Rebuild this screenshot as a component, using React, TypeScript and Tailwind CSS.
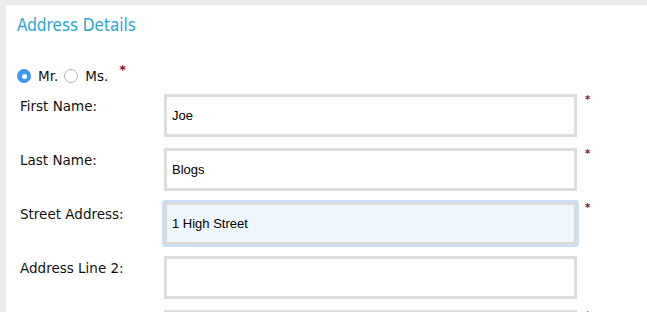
const fields = [
  { label: "First Name:", value: "Joe", required: true },
  { label: "Last Name:", value: "Blogs", required: true },
  { label: "Street Address:", value: "1 High Street", required: true, focused: true },
  { label: "Address Line 2:", value: "", required: false },
  { label: "", value: "", required: true },
];

export default function App() {
  return (
    <div className="h-[312px] overflow-hidden bg-[#ececec] pl-[6px] pt-[5px]">
      <div className="h-full bg-white pl-[11px] font-['DejaVu_Sans',Verdana,sans-serif] text-[13.5px] text-[#111]">
        {/* Section title */}
        <h2 className="pt-[10px] font-['DejaVu_Sans_Condensed','DejaVu_Sans',sans-serif] text-[17px] leading-[20px] text-[#27a5d7]">
          Address Details
        </h2>

        {/* Title radios */}
        <div className="mt-[28px] flex items-start">
          <div className="mt-[5px] flex h-[16px] items-center">
            <span className="flex h-[14px] w-[14px] items-center justify-center rounded-full bg-[#3b99fc]">
              <span className="h-[5px] w-[5px] rounded-full bg-white" />
            </span>
            <span className="ml-[7px] leading-[16px]">Mr.</span>
            <span className="ml-[6px] h-[14px] w-[14px] rounded-full border border-[#b4b4b4] bg-white" />
            <span className="ml-[7px] leading-[16px]">Ms.</span>
          </div>
          <span className="ml-[11px] text-[13px] leading-[13px] font-bold text-[#8a0b2e]">*</span>
        </div>

        {/* Fields */}
        <div className="mt-[10px] flex flex-col gap-[11px]">
          {fields.map((f, i) => (
            <div key={i} className="flex items-start">
              <label className="w-[147px] pl-[3px] pt-[4px] leading-[16px]">{f.label}</label>
              <input
                readOnly
                value={f.value}
                className={
                  f.focused
                    ? "h-[43px] w-[413px] rounded-[2px] border-[3px] border-[#dadada] bg-[#eef6fe] pl-[5px] font-['Liberation_Sans',Arial,sans-serif] text-[13px] text-black shadow-[0_0_0_2px_#c5e0fa] outline-none"
                    : "h-[43px] w-[413px] border-[3px] border-[#dcdcdc] bg-white pl-[5px] font-['Liberation_Sans',Arial,sans-serif] text-[13px] text-black outline-none"
                }
              />
              {f.required && (
                <span className="ml-[8px] mt-[1px] text-[10px] leading-[10px] font-bold text-[#8a0b2e]">*</span>
              )}
            </div>
          ))}
        </div>
      </div>
    </div>
  );
}
